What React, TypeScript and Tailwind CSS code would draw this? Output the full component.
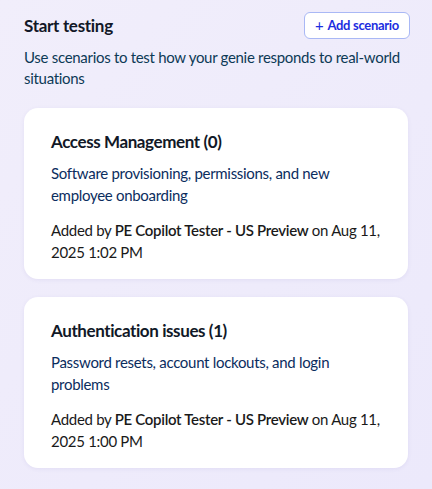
import React from 'react';

interface Scenario {
  title: string;
  count: number;
  description: string;
  author: string;
  date: string;
}

const scenarios: Scenario[] = [
  {
    title: 'Access Management',
    count: 0,
    description: 'Software provisioning, permissions, and new employee onboarding',
    author: 'PE Copilot Tester - US Preview',
    date: 'Aug 11, 2025 1:02 PM',
  },
  {
    title: 'Authentication issues',
    count: 1,
    description: 'Password resets, account lockouts, and login problems',
    author: 'PE Copilot Tester - US Preview',
    date: 'Aug 11, 2025 1:00 PM',
  },
];

const ScenarioCard: React.FC<{ scenario: Scenario }> = ({ scenario }) => (
  <div className="bg-white rounded-[14px] shadow-[0_1px_4px_rgba(80,70,160,0.08)] pl-[27px] pr-5 pt-[22px] pb-[16px]">
    <h3 className="text-[17px] font-bold text-[#111827] leading-[24px] tracking-[-0.4px]">
      {scenario.title} ({scenario.count})
    </h3>
    <p className="mt-[8px] text-[15px] leading-[22px] text-[#0b2d5e]">{scenario.description}</p>
    <p className="mt-[13px] text-[15px] leading-[22px] text-[#1a1a1a]">
      Added by <span className="font-semibold">{scenario.author}</span> on {scenario.date}
    </p>
  </div>
);

export default function App() {
  return (
    <div
      className="w-[432px] h-[489px] bg-gradient-to-br from-[#f1eefb] to-[#ece9fb] px-6 pt-3 tracking-[-0.3px]"
      style={{ fontFamily: 'Lato, "Noto Sans", sans-serif' }}
    >
      <div className="flex items-center justify-between">
        <h2 className="text-[17px] font-bold text-[#111827]">Start testing</h2>
        <button className="mr-[-2px] flex items-center gap-1 rounded-[6px] border border-[#a9b8f5] bg-white px-[10px] h-[27px] text-[13px] font-bold text-[#1c2de0]">
          <span className="text-[15px] font-normal leading-none">+</span> Add scenario
        </button>
      </div>
      <p className="mt-[8px] text-[15px] leading-[21px] text-[#0d3a56]">
        Use scenarios to test how your genie responds to real-world situations
      </p>
      <div className="mt-[19px] flex flex-col gap-[18px]">
        {scenarios.map((s) => (
          <ScenarioCard key={s.title} scenario={s} />
        ))}
      </div>
    </div>
  );
}
